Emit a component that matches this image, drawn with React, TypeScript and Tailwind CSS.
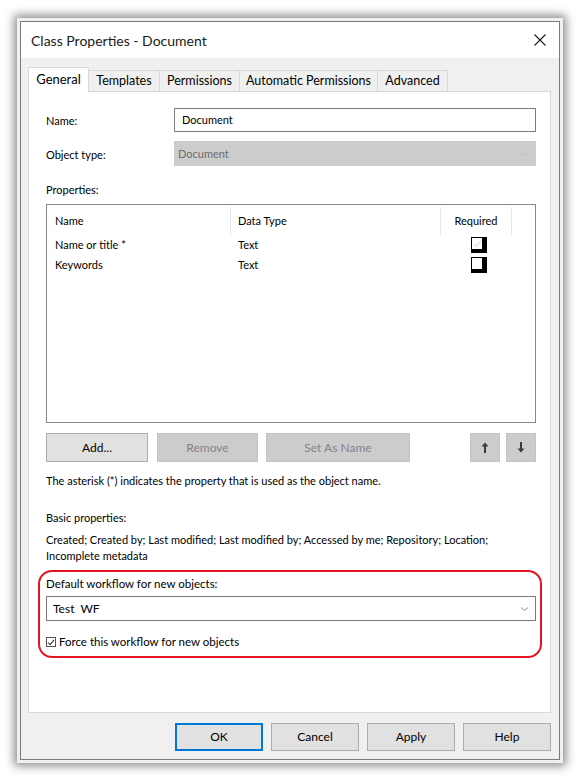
import React from "react";

const F = "font-['Lato','Liberation_Sans',sans-serif]";

function Chevron({ color }: { color: string }) {
  return (
    <svg width="9" height="6" viewBox="0 0 9 6" className="shrink-0">
      <path d="M1 1.5 L4.5 4.5 L8 1.5" fill="none" stroke={color} strokeWidth="1" />
    </svg>
  );
}

function ReqBox({ checked }: { checked?: boolean }) {
  return (
    <div className="w-[16px] h-[16px] border-l border-t border-r-[5px] border-b-[4px] border-black bg-white flex items-center justify-center">
      {checked && (
        <svg width="9" height="8" viewBox="0 0 9 8">
          <path d="M1 4 L3.5 6.5 L8 1" fill="none" stroke="#d0d0d0" strokeWidth="1" />
        </svg>
      )}
    </div>
  );
}

function Arrow({ up }: { up?: boolean }) {
  return (
    <svg width="8" height="11" viewBox="0 0 8 11">
      {up ? (
        <>
          <path d="M4 0.5 L7.5 4.5 L0.5 4.5 Z" fill="#3c3c3c" />
          <rect x="3" y="4" width="2" height="7" fill="#3c3c3c" />
        </>
      ) : (
        <>
          <path d="M4 10.5 L7.5 6.5 L0.5 6.5 Z" fill="#3c3c3c" />
          <rect x="3" y="0" width="2" height="7" fill="#3c3c3c" />
        </>
      )}
    </svg>
  );
}

export default function App() {
  const tabs = ["Templates", "Permissions", "Automatic Permissions", "Advanced"];
  const tabW = ["w-[71px]", "w-[80px]", "w-[138px]", "w-[70px]"];
  return (
    <div className={`w-[582px] h-[784px] bg-white pt-[18px] pl-[17px] ${F} text-[11px] text-black`}>
      <div className="w-[546px] h-[745px] bg-[#f0f0f0] p-[3px] shadow-[0_0_9px_3px_rgba(0,0,0,0.45)]">
        <div className="h-full border border-[#7a7a7a] flex flex-col">
          {/* Title bar */}
          <div className="h-[36px] bg-white flex items-center pl-[10px] pr-[13px] shrink-0">
            <span className="text-[14px] text-[#1a1a1a] flex-1 pt-[1px]">Class Properties - Document</span>
            <svg width="12" height="12" viewBox="0 0 12 12">
              <path d="M0.5 0.5 L11.5 11.5 M11.5 0.5 L0.5 11.5" stroke="#1a1a1a" strokeWidth="1.1" />
            </svg>
          </div>
          {/* Body */}
          <div className="flex-1 flex flex-col pl-[7px] pr-[8px] pt-[8px] pb-[7px]">
            {/* Tabs */}
            <div className="flex items-end h-[25px] relative z-10">
              <div className="w-[61px] h-[25px] bg-white border border-b-0 border-[#d9d9d9] flex items-center justify-center text-[13px] -mb-px pb-[1px]">
                General
              </div>
              {tabs.map((t, i) => (
                <div
                  key={t}
                  className={`${tabW[i]} h-[21px] border border-l-0 border-b-0 border-[#d9d9d9] bg-[#f0f0f0] flex items-center justify-center text-[12.5px] pt-[1px]`}
                >
                  {t}
                </div>
              ))}
            </div>
            {/* Panel */}
            <div className="h-[622px] bg-white border border-[#d9d9d9] pl-[17px] pr-[14px] pt-[16px] flex flex-col">
              <div className="flex items-center h-[24px]">
                <div className="w-[128px] pt-[2px]">Name:</div>
                <div className="flex-1 h-[24px] border border-[#7a7a7a] flex items-center pl-[7px]">Document</div>
              </div>
              <div className="flex items-center h-[25px] mt-[9px]">
                <div className="w-[128px] pt-[3px]">Object type:</div>
                <div className="flex-1 h-[25px] bg-[#cccccc] flex items-center pl-[4px] pr-[6px] text-[#6d6d6d]">
                  <span className="flex-1 pt-[1px]">Document</span>
                  <Chevron color="#bdbdbd" />
                </div>
              </div>
              <div className="mt-[16px] h-[16px] leading-[16px]">Properties:</div>
              <div className="mt-[6px] h-[219px] border border-[#828790] pt-[2px]">
                <div className="flex h-[28px] items-center">
                  <div className="w-[184px] pl-[8px] h-full flex items-center border-r border-[#e5e5e5]">Name</div>
                  <div className="w-[210px] pl-[7px] h-full flex items-center border-r border-[#e5e5e5]">Data Type</div>
                  <div className="w-[71px] h-full flex items-center justify-center border-r border-[#e5e5e5]">Required</div>
                </div>
                <div className="flex h-[20px] items-center">
                  <div className="w-[184px] pl-[8px]">Name or title *</div>
                  <div className="w-[210px] pl-[7px]">Text</div>
                  <div className="w-[71px] flex justify-center pl-[5px]"><ReqBox checked /></div>
                </div>
                <div className="flex h-[20px] items-center">
                  <div className="w-[184px] pl-[8px]">Keywords</div>
                  <div className="w-[210px] pl-[7px]">Text</div>
                  <div className="w-[71px] flex justify-center pl-[5px]"><ReqBox /></div>
                </div>
              </div>
              <div className="mt-[10px] flex h-[29px] text-[12px]">
                <div className="w-[102px] bg-[#e1e1e1] border border-[#adadad] flex items-center justify-center">Add...</div>
                <div className="w-[101px] ml-[9px] bg-[#cccccc] border border-[#c4c4c4] flex items-center justify-center text-[#838383]">Remove</div>
                <div className="w-[144px] ml-[8px] bg-[#cccccc] border border-[#c4c4c4] flex items-center justify-center text-[#838383]">Set As Name</div>
                <div className="flex-1" />
                <div className="w-[30px] bg-[#cccccc] border border-[#c4c4c4] flex items-center justify-center"><Arrow up /></div>
                <div className="w-[30px] ml-[6px] bg-[#cccccc] border border-[#c4c4c4] flex items-center justify-center"><Arrow /></div>
              </div>
              <div className="mt-[11px] h-[16px] leading-[16px]">The asterisk (*) indicates the property that is used as the object name.</div>
              <div className="mt-[21px] h-[16px] leading-[16px]">Basic properties:</div>
              <div className="mt-[6px] leading-[16px]">
                Created; Created by; Last modified; Last modified by; Accessed by me; Repository; Location;
                <br />
                Incomplete metadata
              </div>
              {/* Highlighted region */}
              <div className="mt-[6px] -ml-[8px] -mr-[6px] h-[88px] border-2 border-[#e3161f] rounded-[14px] pl-[6px] pr-[4px] pt-[4px]">
                <div className="h-[16px] leading-[16px] text-[11.5px]">Default workflow for new objects:</div>
                <div className="mt-[4px] h-[25px] border border-[#7a7a7a] flex items-center pl-[6px] pr-[6px] text-[12px]">
                  <span className="flex-1 whitespace-pre">Test  WF</span>
                  <Chevron color="#8a8a8a" />
                </div>
                <div className="mt-[13px] flex items-center h-[16px] text-[11.5px]">
                  <div className="w-[10px] h-[10px] border border-[#555] flex items-center justify-center bg-white">
                    <svg width="8" height="7" viewBox="0 0 9 8">
                      <path d="M1 4 L3.5 6.5 L8 1" fill="none" stroke="#333" strokeWidth="1.2" />
                    </svg>
                  </div>
                  <span className="ml-[3px]">Force this workflow for new objects</span>
                </div>
              </div>
            </div>
            {/* Footer */}
            <div className="mt-[10px] flex justify-end gap-[8px] h-[28px] text-[12px]">
              <div className="w-[88px] bg-[#e1e1e1] border-2 border-[#0078d7] flex items-center justify-center">OK</div>
              <div className="w-[88px] bg-[#e1e1e1] border border-[#adadad] flex items-center justify-center">Cancel</div>
              <div className="w-[88px] bg-[#e1e1e1] border border-[#adadad] flex items-center justify-center">Apply</div>
              <div className="w-[88px] bg-[#e1e1e1] border border-[#adadad] flex items-center justify-center">Help</div>
            </div>
          </div>
        </div>
      </div>
    </div>
  );
}
